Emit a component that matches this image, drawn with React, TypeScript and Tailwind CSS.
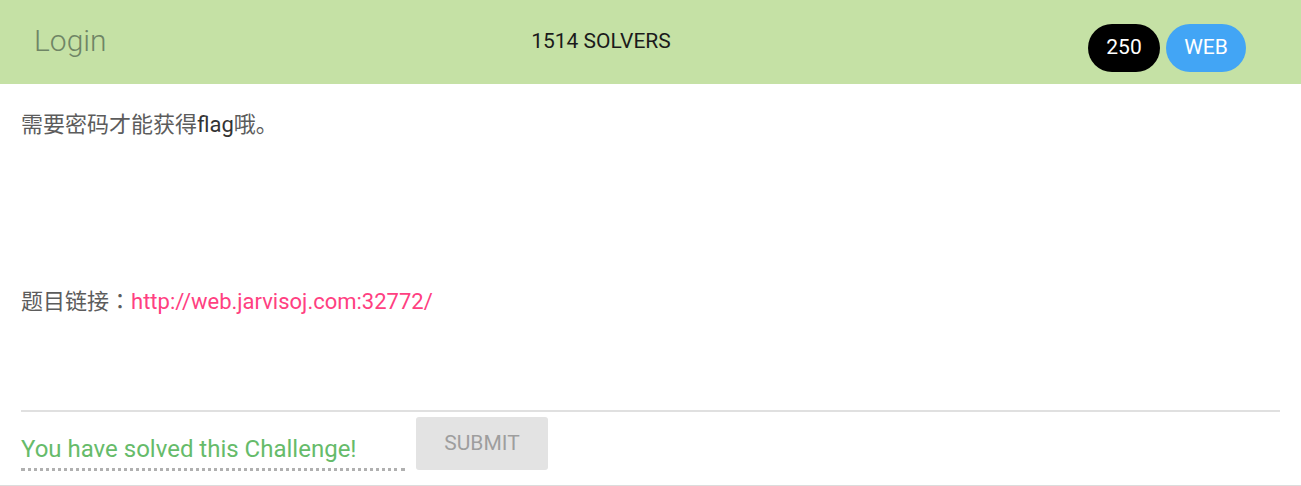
export default function App() {
    return (
        <div className="w-[1301px] h-[486px] bg-white overflow-hidden font-['Roboto',_'Noto_Sans_CJK_SC',_sans-serif]">
            <div className="h-[84px] bg-[#c5e1a5] flex items-center pl-[34px] pr-[55px]">
                <div className="w-[300px] text-[30px] font-light text-[#6f8565] leading-none -mt-[2px]">Login</div>
                <div className="flex-1 text-center text-[21px] text-[#1b1b1b] pr-[220px]">1514 SOLVERS</div>
                <div className="flex items-center gap-[6px] mt-[12px]">
                    <span className="h-[48px] w-[72px] rounded-full bg-black text-white text-[21px] flex items-center justify-center">250</span>
                    <span className="h-[48px] w-[80px] rounded-full bg-[#42a5f5] text-white text-[21px] flex items-center justify-center">WEB</span>
                </div>
            </div>

            <div className="px-[21px]">
                <p className="mt-[24px] text-[22px] leading-[33px] text-[#5c5c5c]">
                    需要密码才能获得<span className="text-[#333]">flag</span>哦。
                </p>
                <p className="mt-[142px] h-[33px] text-[22px] leading-[33px] text-[#5c5c5c]">
                    题目链接<span className="font-['Noto_Sans_CJK_TC',_sans-serif]">：</span>
                    <a href="#" className="text-[#ff4081]">http://web.jarvisoj.com:32772/</a>
                </p>

                <div className="mt-[94px] border-t-2 border-[#e0e0e0]" />

                <div className="flex items-start gap-[11px] pt-[5px]">
                    <div className="w-[384px] h-[54px] border-b-[3px] border-dotted border-[#b0b0b0] flex items-end pb-[7px]">
                        <span className="text-[24px] text-[#66bb6a] leading-none">You have solved this Challenge!</span>
                    </div>
                    <button className="w-[132px] h-[53px] rounded-[3px] bg-[#e3e3e3] text-[#9e9e9e] text-[21px]">SUBMIT</button>
                </div>
            </div>
            <div className="mt-[14px] border-t border-[#dcdcdc]" />
        </div>
    );
}
